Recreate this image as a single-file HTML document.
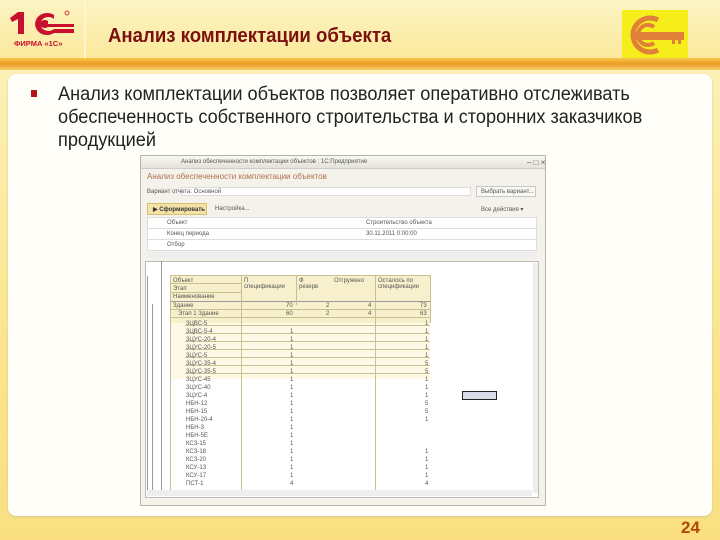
<!DOCTYPE html>
<html><head><meta charset="utf-8"><style>
*{margin:0;padding:0;box-sizing:border-box}
body{width:720px;height:540px;overflow:hidden;position:relative;font-family:"Liberation Sans",sans-serif;background:linear-gradient(#fdf3c0,#fbe690 60%,#f9df80);}
.hdr{position:absolute;left:0;top:0;width:720px;height:60px;background:linear-gradient(#fcf4c4,#fbe89a);}
.sep{position:absolute;left:84px;top:0;width:2px;height:60px;background:#fff6cf;}
.bar{position:absolute;left:0;top:58px;width:720px;height:12px;background:linear-gradient(#f7c84a,#ec9a24 50%,#f6cf70);}
.panel{position:absolute;left:8px;top:74px;width:704px;height:442px;background:#fffef8;border-radius:8px;box-shadow:0 1px 2px #d8c88a;}
.title{position:absolute;left:108px;top:25px;font-size:20px;font-weight:bold;color:#7a1010;transform:scaleX(0.93);transform-origin:left;white-space:nowrap}
.txt{position:absolute;left:58px;top:83px;font-size:19px;line-height:23px;color:#222;width:670px;transform:scaleX(0.955);transform-origin:left top;}
.bul{position:absolute;left:31px;top:90px;width:6px;height:7px;background:#b01818;}
.num{position:absolute;left:681px;top:518px;font-size:17px;font-weight:bold;color:#b34800;}
.key{position:absolute;left:622px;top:10px;width:66px;height:48px;background:#f5ee1a;}
.win{position:absolute;left:140px;top:155px;width:406px;height:351px;background:#f4f2ea;border:1px solid #b8b5a8;}
.a{position:absolute}
.t{position:absolute;font-size:6px;color:#555;white-space:nowrap}
</style></head><body>
<div class="hdr"></div><div class="sep"></div><div class="bar"></div>
<svg class="a" style="left:8px;top:8px" width="72" height="42" viewBox="0 0 72 42">
<path d="M2 10 L10 4 L16 4 L16 26 L10 26 L10 11 L4 14Z" fill="#c8102e"/>
<path d="M46 7 A12 11 0 1 0 46 25 L66 25 L66 21 L46 21 A8 7 0 1 1 46 11Z" fill="#c8102e"/>
<path d="M40 13 A5 4 0 1 0 40 19 L66 19 L66 16 L40 16Z" fill="#c8102e"/>
<circle cx="59" cy="5" r="2" fill="none" stroke="#c8102e" stroke-width="0.8"/>
<text x="6" y="38" font-size="7.5" font-weight="bold" fill="#c8102e" font-family="Liberation Sans">ФИРМА «1С»</text>
</svg>
<div class="title">Анализ комплектации объекта</div>
<div class="key"><svg width="66" height="48" viewBox="0 0 66 48">
<path d="M36 10 A17 17 0 1 0 36 40" fill="none" stroke="#e0803a" stroke-width="5"/>
<path d="M32 17 A10 10 0 1 0 32 33" fill="none" stroke="#e0803a" stroke-width="4"/>
<rect x="10" y="22" width="52" height="8" fill="#e0803a"/><rect x="50" y="30" width="3" height="4" fill="#e0803a"/><rect x="56" y="30" width="3" height="4" fill="#e0803a"/>
</svg></div>
<div class="panel"></div>
<div class="bul"></div>
<div class="txt">Анализ комплектации объектов позволяет оперативно отслеживать обеспеченность собственного строительства и сторонних заказчиков продукцией</div>
<div class="win">
<div class="a" style="left:0;top:0;width:404px;height:13px;background:linear-gradient(#f8f8f4,#e4e2da);border-bottom:1px solid #ccc"></div>
<div class="t" style="left:40px;top:3px">Анализ обеспеченности комплектации объектов : 1С:Предприятие</div>
<div class="t" style="left:386px;top:2px;font-size:8px">– □ ×</div>
<div class="t" style="left:6px;top:16px;font-size:8px;color:#b07050">Анализ обеспеченности комплектации объектов</div>
<div class="a" style="left:40px;top:31px;width:290px;height:9px;background:#fff;border:1px solid #ddd"></div>
<div class="t" style="left:6px;top:33px">Вариант отчета: Основной</div>
<div class="a" style="left:335px;top:30px;width:60px;height:11px;background:#f8f8f4;border:1px solid #c8c8c0"></div>
<div class="t" style="left:340px;top:33px">Выбрать вариант...</div>
<div class="a" style="left:6px;top:47px;width:60px;height:12px;background:#f4e3a8;border:1px solid #d8c070"></div>
<div class="t" style="left:12px;top:50px;font-weight:bold;color:#333">▶ Сформировать</div>
<div class="t" style="left:74px;top:50px">Настройка...</div>
<div class="t" style="left:340px;top:50px">Все действия ▾</div>
<div class="a" style="left:6px;top:61px;width:390px;height:34px;background:#fff;border:1px solid #ddd"></div>
<div class="a" style="left:6px;top:72px;width:390px;height:1px;background:#ddd"></div>
<div class="a" style="left:6px;top:83px;width:390px;height:1px;background:#ddd"></div>
<div class="t" style="left:26px;top:64px">Объект</div><div class="t" style="left:225px;top:64px">Строительство объекта</div>
<div class="t" style="left:26px;top:75px">Конец периода</div><div class="t" style="left:225px;top:75px">30.11.2011 0:00:00</div>
<div class="t" style="left:26px;top:86px">Отбор</div>
<div class="a" style="left:6px;top:96px;width:390px;height:6px;background:#eee"></div>
<div class="a" style="left:4px;top:105px;width:394px;height:237px;background:#fff;border:1px solid #bbb"></div>
<div class="a" style="left:6px;top:120px;width:1px;height:220px;background:#999"></div>
<div class="a" style="left:11px;top:148px;width:1px;height:190px;background:#999"></div>
<div class="a" style="left:20px;top:105px;width:1px;height:235px;background:#999"></div>
<div class="a" style="left:392px;top:107px;width:5px;height:230px;background:#eee"></div>
<div class="a" style="left:6px;top:334px;width:385px;height:6px;background:#eee"></div>
</div>
<div class="a" style="left:170px;top:275px;width:260px;height:48px;background:#f8f0cc"></div>
<div class="a" style="left:170px;top:323px;width:260px;height:56px;background:#fdf9e6"></div>
<div class="a" style="left:170px;top:275px;width:260px;height:1px;background:#c8c090"></div>
<div class="a" style="left:170px;top:283px;width:71px;height:1px;background:#c8c090"></div>
<div class="a" style="left:170px;top:292px;width:71px;height:1px;background:#c8c090"></div>
<div class="a" style="left:170px;top:301px;width:260px;height:1px;background:#999"></div>
<div class="a" style="left:170px;top:275px;width:1px;height:215px;background:#c8c090"></div>
<div class="a" style="left:241px;top:275px;width:1px;height:215px;background:#c8c090"></div>
<div class="a" style="left:375px;top:275px;width:1px;height:215px;background:#c8c090"></div>
<div class="a" style="left:296px;top:275px;width:1px;height:30px;background:#c8c090"></div>
<div class="a" style="left:430px;top:275px;width:1px;height:48px;background:#c8c090"></div>
<div class="a" style="left:170px;top:309px;width:260px;height:1px;background:#c8c090"></div>
<div class="a" style="left:170px;top:317px;width:260px;height:1px;background:#c8c090"></div>
<div class="a" style="left:185px;top:325px;width:245px;height:1px;background:#c8c090"></div>
<div class="a" style="left:185px;top:333px;width:245px;height:1px;background:#c8c090"></div>
<div class="a" style="left:185px;top:341px;width:245px;height:1px;background:#c8c090"></div>
<div class="a" style="left:185px;top:349px;width:245px;height:1px;background:#c8c090"></div>
<div class="a" style="left:185px;top:357px;width:245px;height:1px;background:#c8c090"></div>
<div class="a" style="left:185px;top:365px;width:245px;height:1px;background:#c8c090"></div>
<div class="a" style="left:185px;top:373px;width:245px;height:1px;background:#c8c090"></div>
<div class="t" style="left:173px;top:278px">Объект</div><div class="t" style="left:173px;top:286px">Этап</div><div class="t" style="left:173px;top:294px">Наименование</div>
<div class="t" style="left:244px;top:278px">П<br>спецификации</div><div class="t" style="left:299px;top:278px">Ф<br>резерв</div>
<div class="t" style="left:334px;top:278px">Отгружено</div><div class="t" style="left:378px;top:278px">Осталось по<br>спецификации</div>
<div class="t" style="left:173px;top:303px">Здание</div><div class="t" style="left:178px;top:311px">Этап 1 Здание</div>
<div class="t" style="left:286px;top:303px">70</div><div class="t" style="left:326px;top:303px">2</div><div class="t" style="left:368px;top:303px">4</div><div class="t" style="left:420px;top:303px">73</div>
<div class="t" style="left:286px;top:311px">60</div><div class="t" style="left:326px;top:311px">2</div><div class="t" style="left:368px;top:311px">4</div><div class="t" style="left:420px;top:311px">63</div>
<div class="t" style="left:186px;top:320px;line-height:8px">3ЦВС-5<br>3ЦВС-5-4<br>3ЦУС-20-4<br>3ЦУС-20-5<br>3ЦУС-5<br>3ЦУС-35-4<br>3ЦУС-35-5<br>3ЦУС-45<br>3ЦУС-40<br>3ЦУС-4<br>НБН-12<br>НБН-15<br>НБН-20-4<br>НБН-3<br>НБН-5Е<br>КСЗ-15<br>КСЗ-18<br>КСЗ-20<br>КСУ-13<br>КСУ-17<br>ПСТ-1</div>
<div class="t" style="left:290px;top:320px;line-height:8px">&nbsp;<br>1<br>1<br>1<br>1<br>1<br>1<br>1<br>1<br>1<br>1<br>1<br>1<br>1<br>1<br>1<br>1<br>1<br>1<br>1<br>4</div>
<div class="t" style="left:425px;top:320px;line-height:8px">1<br>1<br>1<br>1<br>1<br>5<br>5<br>1<br>1<br>1<br>5<br>5<br>1<br><br><br><br>1<br>1<br>1<br>1<br>4</div>
<div class="a" style="left:462px;top:391px;width:35px;height:9px;background:#d8dce8;border:1.5px solid #222"></div>
<div class="num">24</div>
</body></html>
